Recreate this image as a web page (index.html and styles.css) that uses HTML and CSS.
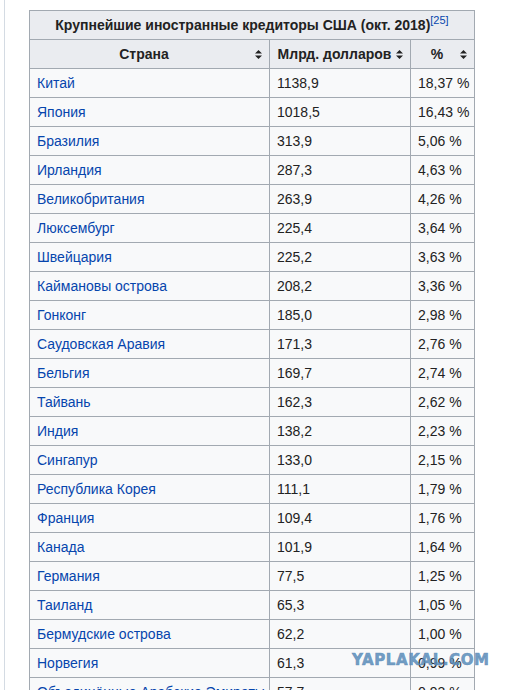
FILE: index.html
```html
<!DOCTYPE html>
<html lang="ru">
<head>
    <meta charset="UTF-8">
    <title>Крупнейшие иностранные кредиторы США</title>
    <link rel="stylesheet" href="styles.css">
</head>
<body>
    <div class="content">
        <table class="wikitable">
            <colgroup>
                <col class="col-country">
                <col class="col-amount">
                <col class="col-share">
            </colgroup>
            <caption>Крупнейшие иностранные кредиторы США (окт. 2018)<sup><a href="#">[25]</a></sup></caption>
            <thead>
                <tr>
                    <th><span>Страна</span><i class="sort"></i></th>
                    <th><span>Млрд. долларов</span><i class="sort"></i></th>
                    <th><span>%</span><i class="sort"></i></th>
                </tr>
            </thead>
            <tbody id="rows"></tbody>
        </table>
        <div class="watermark">YAPLAKAL.COM</div>
    </div>

    <script>
        const creditors = [
            ['Китай', '1138,9', '18,37 %'],
            ['Япония', '1018,5', '16,43 %'],
            ['Бразилия', '313,9', '5,06 %'],
            ['Ирландия', '287,3', '4,63 %'],
            ['Великобритания', '263,9', '4,26 %'],
            ['Люксембург', '225,4', '3,64 %'],
            ['Швейцария', '225,2', '3,63 %'],
            ['Каймановы острова', '208,2', '3,36 %'],
            ['Гонконг', '185,0', '2,98 %'],
            ['Саудовская Аравия', '171,3', '2,76 %'],
            ['Бельгия', '169,7', '2,74 %'],
            ['Тайвань', '162,3', '2,62 %'],
            ['Индия', '138,2', '2,23 %'],
            ['Сингапур', '133,0', '2,15 %'],
            ['Республика Корея', '111,1', '1,79 %'],
            ['Франция', '109,4', '1,76 %'],
            ['Канада', '101,9', '1,64 %'],
            ['Германия', '77,5', '1,25 %'],
            ['Таиланд', '65,3', '1,05 %'],
            ['Бермудские острова', '62,2', '1,00 %'],
            ['Норвегия', '61,3', '0,99 %'],
            ['Объединённые Арабские Эмираты', '57,7', '0,93 %']
        ];

        const sortIcon = `<svg width="7" height="9" viewBox="0 0 7 9"><path d="M3.5 0L7 3.6H0z M3.5 9L0 5.4h7z" fill="#222"/></svg>`;
        document.querySelectorAll('.sort').forEach(el => el.innerHTML = sortIcon);

        document.getElementById('rows').innerHTML = creditors.map(([country, amount, share]) => `
            <tr>
                <td><a href="#">${country}</a></td>
                <td>${amount}</td>
                <td>${share}</td>
            </tr>
        `).join('');
    </script>
</body>
</html>
```

FILE: styles.css
```css
* {
    margin: 0;
    padding: 0;
    box-sizing: border-box;
}

html, body {
    overflow: hidden;
}

body {
    background: #fff;
    color: #222;
    font-family: "Liberation Sans", Arial, sans-serif;
    font-size: 14px;
    height: 690px;
}

.content {
    position: relative;
    margin-left: 4px;
    border-left: 1px solid #d4dbe3;
    min-height: 690px;
    padding: 10px 0 0 24px;
}

a {
    color: #0645ad;
    text-decoration: none;
}

.wikitable {
    width: 445px;
    table-layout: fixed;
    border-collapse: collapse;
    background: #f8f9fa;
    border: 1px solid #a2a9b1;
}

.col-country { width: 240px; }
.col-amount { width: 141px; }
.col-share { width: 64px; }

.wikitable caption {
    background: #eaecf0;
    border: 1px solid #a2a9b1;
    border-bottom: none;
    font-weight: bold;
    height: 29px;
    line-height: 28px;
    text-align: center;
    white-space: nowrap;
}

.wikitable caption sup {
    font-weight: normal;
    font-size: 11px;
    line-height: 0;
    vertical-align: 6px;
}

.wikitable th,
.wikitable td {
    border: 1px solid #a2a9b1;
    height: 29px;
    line-height: 22px;
    padding: 3px 7px;
    white-space: nowrap;
    overflow: hidden;
}

.wikitable th {
    background: #eaecf0;
    font-weight: bold;
    text-align: center;
    position: relative;
    padding-right: 18px;
}

.sort {
    position: absolute;
    right: 7px;
    top: 10px;
    width: 7px;
    height: 9px;
    display: block;
}

.sort svg {
    display: block;
}

.watermark {
    position: absolute;
    left: 347px;
    top: 651px;
    font-family: "DejaVu Sans", sans-serif;
    font-weight: bold;
    font-size: 15px;
    letter-spacing: 0.6px;
    color: rgba(90, 140, 185, 0.85);
    -webkit-text-stroke: 0.6px rgba(90, 140, 185, 0.85);
    pointer-events: none;
}
```
